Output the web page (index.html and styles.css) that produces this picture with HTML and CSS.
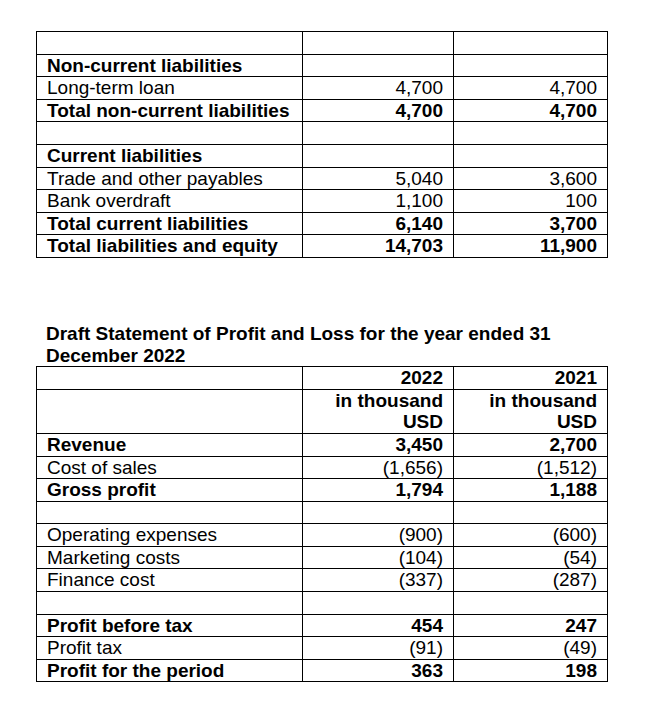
FILE: index.html
```html
<!DOCTYPE html>
<html lang="en">
<head>
<meta charset="utf-8">
<title>Financial statements</title>
<link rel="stylesheet" href="styles.css">
</head>
<body>
<div class="page">
  <table class="fin">
    <colgroup><col class="c-label"><col class="c-num"><col class="c-num2"></colgroup>
    <tbody>
      <tr><td></td><td></td><td></td></tr>
      <tr class="b"><td>Non-current liabilities</td><td></td><td></td></tr>
      <tr><td>Long-term loan</td><td class="n">4,700</td><td class="n">4,700</td></tr>
      <tr class="b"><td>Total non-current liabilities</td><td class="n">4,700</td><td class="n">4,700</td></tr>
      <tr><td></td><td></td><td></td></tr>
      <tr class="b"><td>Current liabilities</td><td></td><td></td></tr>
      <tr><td>Trade and other payables</td><td class="n">5,040</td><td class="n">3,600</td></tr>
      <tr><td>Bank overdraft</td><td class="n">1,100</td><td class="n">100</td></tr>
      <tr class="b"><td>Total current liabilities</td><td class="n">6,140</td><td class="n">3,700</td></tr>
      <tr class="b"><td>Total liabilities and equity</td><td class="n">14,703</td><td class="n">11,900</td></tr>
    </tbody>
  </table>

  <h2 class="title">Draft Statement of Profit and Loss for the year ended 31 December 2022</h2>

  <table class="fin">
    <colgroup><col class="c-label"><col class="c-num"><col class="c-num2"></colgroup>
    <tbody>
      <tr class="b"><td></td><td class="n">2022</td><td class="n">2021</td></tr>
      <tr class="b"><td></td><td class="n">in thousand<br>USD</td><td class="n">in thousand<br>USD</td></tr>
      <tr class="b"><td>Revenue</td><td class="n">3,450</td><td class="n">2,700</td></tr>
      <tr><td>Cost of sales</td><td class="n">(1,656)</td><td class="n">(1,512)</td></tr>
      <tr class="b"><td>Gross profit</td><td class="n">1,794</td><td class="n">1,188</td></tr>
      <tr><td></td><td></td><td></td></tr>
      <tr><td>Operating expenses</td><td class="n">(900)</td><td class="n">(600)</td></tr>
      <tr><td>Marketing costs</td><td class="n">(104)</td><td class="n">(54)</td></tr>
      <tr><td>Finance cost</td><td class="n">(337)</td><td class="n">(287)</td></tr>
      <tr><td></td><td></td><td></td></tr>
      <tr class="b"><td>Profit before tax</td><td class="n">454</td><td class="n">247</td></tr>
      <tr><td>Profit tax</td><td class="n">(91)</td><td class="n">(49)</td></tr>
      <tr class="b"><td>Profit for the period</td><td class="n">363</td><td class="n">198</td></tr>
    </tbody>
  </table>
</div>
</body>
</html>
```

FILE: styles.css
```css
html, body {
  margin: 0;
  padding: 0;
  background: #ffffff;
}

body {
  font-family: "Liberation Sans", Arial, sans-serif;
  font-size: 19px;
  line-height: 21.6px;
  color: #000000;
}

.page {
  padding: 31px 0 0 36px;
}

.fin {
  border-collapse: collapse;
  table-layout: fixed;
  width: 571px;
}

.c-label { width: 266px; }
.c-num { width: 151px; }
.c-num2 { width: 154px; }

.fin td {
  border: 1px solid #000000;
  padding: 0 10px;
  height: 21.6px;
  vertical-align: top;
  white-space: nowrap;
}

.fin tr.b td {
  font-weight: bold;
}

.fin td.n {
  text-align: right;
}

.title {
  width: 540px;
  margin: 65px 0 0 0;
  padding: 0 0 0 10px;
  font-size: 19px;
  line-height: 21.6px;
  font-weight: bold;
}
```
